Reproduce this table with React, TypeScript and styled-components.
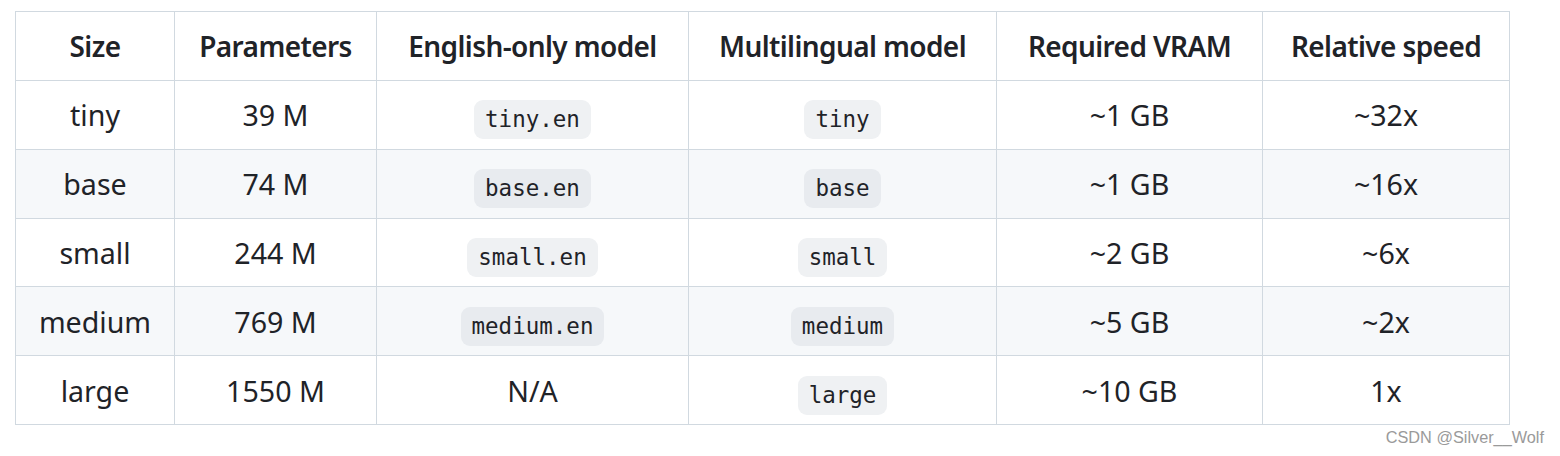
import React from "react";
import styled, { createGlobalStyle } from "styled-components";

const Global = createGlobalStyle`
  html, body { margin: 0; padding: 0; background: #ffffff; }
  body { font-family: "Noto Sans", "Open Sans", sans-serif; color: #1f2328; }
`;

const Page = styled.div`
  width: 1560px;
  height: 456px;
  box-sizing: border-box;
  padding: 11px 0 0 15px;
  display: flex;
  flex-direction: column;
  align-items: flex-start;
`;

const Table = styled.table`
  border-collapse: collapse;
  table-layout: fixed;
  width: 1494px;
  font-size: 28.6px;
`;

const Row = styled.tr<{ $striped?: boolean; $head?: boolean }>`
  background: ${(p) => (p.$striped ? "#f6f8fa" : "#ffffff")};
  height: ${(p) => (p.$head ? "69px" : "68.8px")};
`;

const Th = styled.th`
  border: 1px solid #d1d9e0;
  font-weight: 600;
  font-size: 28px;
  letter-spacing: -0.6px;
  text-align: center;
  padding: 0 12px;
  white-space: nowrap;
`;

const Td = styled.td`
  border: 1px solid #d1d9e0;
  text-align: center;
  padding: 0 12px;
  white-space: nowrap;
`;

const Code = styled.code<{ $striped?: boolean }>`
  display: inline-block;
  font-family: "DejaVu Sans Mono", "Liberation Mono", monospace;
  font-size: 22.5px;
  line-height: 39px;
  padding: 0 11px;
  border-radius: 9px;
  background: ${(p) => (p.$striped ? "#e8ebef" : "#eff1f3")};
  position: relative;
  top: 3px;
`;

const Watermark = styled.div`
  align-self: flex-end;
  margin-right: 16px;
  margin-top: 3px;
  font-family: "Liberation Sans", Arial, sans-serif;
  font-size: 16.3px;
  color: #9a9a9a;
`;

const widths = [159, 202, 312, 308, 266, 247];
const headers = [
  "Size",
  "Parameters",
  "English-only model",
  "Multilingual model",
  "Required VRAM",
  "Relative speed",
];

const rows: [string, string, string | null, string, string, string][] = [
  ["tiny", "39 M", "tiny.en", "tiny", "~1 GB", "~32x"],
  ["base", "74 M", "base.en", "base", "~1 GB", "~16x"],
  ["small", "244 M", "small.en", "small", "~2 GB", "~6x"],
  ["medium", "769 M", "medium.en", "medium", "~5 GB", "~2x"],
  ["large", "1550 M", null, "large", "~10 GB", "1x"],
];

export default function App() {
  return (
    <>
      <Global />
      <Page>
        <Table>
          <colgroup>
            {widths.map((w, i) => (
              <col key={i} style={{ width: w }} />
            ))}
          </colgroup>
          <thead>
            <Row $head>
              {headers.map((h) => (
                <Th key={h}>{h}</Th>
              ))}
            </Row>
          </thead>
          <tbody>
            {rows.map((r, i) => {
              const striped = i % 2 === 1;
              return (
                <Row key={r[0]} $striped={striped}>
                  <Td>{r[0]}</Td>
                  <Td>{r[1]}</Td>
                  <Td>{r[2] ? <Code $striped={striped}>{r[2]}</Code> : "N/A"}</Td>
                  <Td>
                    <Code $striped={striped}>{r[3]}</Code>
                  </Td>
                  <Td>{r[4]}</Td>
                  <Td>{r[5]}</Td>
                </Row>
              );
            })}
          </tbody>
        </Table>
        <Watermark>CSDN @Silver__Wolf</Watermark>
      </Page>
    </>
  );
}
